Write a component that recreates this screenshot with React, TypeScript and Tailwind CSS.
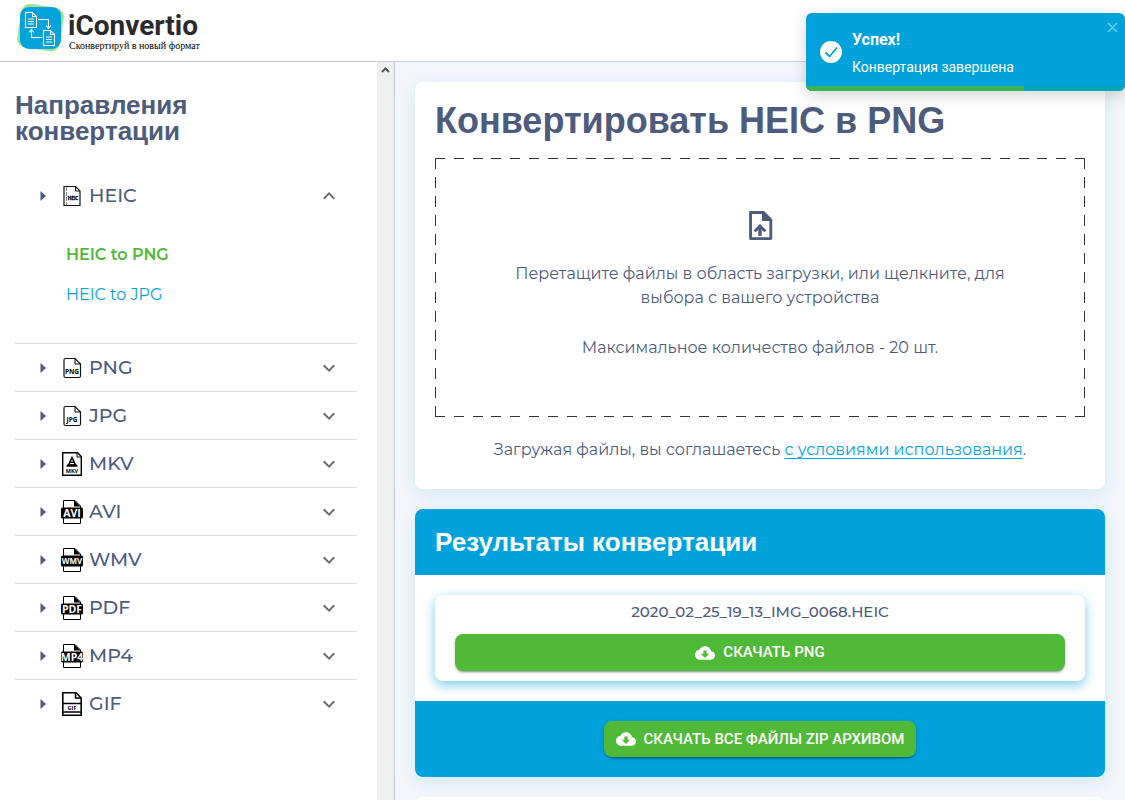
import type { ReactNode } from "react";

const dashedFrame =
  "bg-[repeating-linear-gradient(90deg,#333_0_10px,transparent_10px_calc((100%-10px)/34)),repeating-linear-gradient(90deg,#333_0_10px,transparent_10px_calc((100%-10px)/34)),repeating-linear-gradient(180deg,#333_0_11px,transparent_11px_calc((100%-11px)/13)),repeating-linear-gradient(180deg,#333_0_11px,transparent_11px_calc((100%-11px)/13))] bg-[size:100%_1px,100%_1px,1px_100%,1px_100%] bg-[position:0_0,0_100%,0_0,100%_0] bg-no-repeat";

type Kind = "outline" | "heic" | "mkv" | "band" | "gif";

const formats: { name: string; kind: Kind }[] = [
  { name: "PNG", kind: "outline" },
  { name: "JPG", kind: "outline" },
  { name: "MKV", kind: "mkv" },
  { name: "AVI", kind: "band" },
  { name: "WMV", kind: "band" },
  { name: "PDF", kind: "band" },
  { name: "MP4", kind: "band" },
  { name: "GIF", kind: "gif" },
];

function FormatIcon({ name, kind }: { name: string; kind: Kind }) {
  const label = (y: number, size: number, fill = "#000") => (
    <text x="12" y={y} textAnchor="middle" fontSize={size} fontWeight="700" fill={fill} fontFamily="Open Sans, sans-serif">
      {name}
    </text>
  );
  if (kind === "band") {
    return (
      <svg className="size-6 shrink-0" viewBox="0 0 24 24" aria-hidden="true">
        <path d="M3.500 .5H15L20.500 6V23.500H3.500Z" fill="#fff" stroke="#000" />
        <path d="M14 0 20.500 6.500H14Z" fill="#000" />
        <rect x="1" y="7.500" width="22" height="11" rx="1.500" fill="#000" />
        {label(name === "WMV" ? 16 : 16.8, name === "WMV" ? 8 : 10.5, "#fff")}
      </svg>
    );
  }
  if (kind === "mkv") {
    return (
      <svg className="size-6 shrink-0" viewBox="0 0 24 24" aria-hidden="true">
        <path d="M2.700 .7H17.500L21.300 4.500V23.300H2.700Z" fill="#fff" stroke="#000" strokeWidth="1.400" />
        <path d="M17 .7V5h4.300" fill="none" stroke="#000" />
        <path d="M12 5.500 8.500 13H15.500Z" fill="none" stroke="#000" strokeWidth="1.500" />
        <path d="M10 9.500h4v1.500h-4zM7 12.500h10l.8 2.200H6.200z" fill="#000" />
        {label(21.3, 5.5)}
      </svg>
    );
  }
  if (kind === "gif") {
    return (
      <svg className="size-6 shrink-0" viewBox="0 0 24 24" aria-hidden="true">
        <path d="M2.800 .8H16L21.200 6V23.200H2.800Z" fill="#fff" stroke="#000" strokeWidth="1.600" />
        <path d="M15.500 1V6H21M3 11.500H21M3 20H21" fill="none" stroke="#000" strokeWidth="1.500" />
        {label(17.8, 5.5)}
      </svg>
    );
  }
  return (
    <svg className="size-6 shrink-0" viewBox="0 0 24 24" aria-hidden="true">
      <path
        d={kind === "heic" ? "M4 2.500H15.500L20 7V21.500H4Z" : "M5.500 2.500H15L20.500 8V20Q20.500 21.500 19 21.500H5.500Q4 21.500 4 20V4Q4 2.500 5.500 2.500"}
        fill="#fff"
        stroke="#111"
        strokeWidth="1.200"
      />
      <path d={kind === "heic" ? "M15.500 2.500V7H20" : "M15 2.500V8H20.500"} fill="none" stroke="#111" />
      {kind === "heic" && <path d="M6.500 3V21" stroke="#888" strokeDasharray="4 1" />}
      {kind === "heic" ? (
        <text x="13" y="15.500" textAnchor="middle" fontSize="4.500" fontWeight="700" stroke="#000" strokeWidth=".3" fontFamily="Open Sans, sans-serif">
          {name}
        </text>
      ) : (
        label(17.5, 6.5)
      )}
    </svg>
  );
}

function Caret() {
  return (
    <svg className="h-3 w-2 shrink-0" viewBox="0 0 8 12" aria-hidden="true">
      <path d="M.5 1 6 6 .5 11Z" fill="#4d5b7c" />
    </svg>
  );
}

function Chevron({ up = false }: { up?: boolean }) {
  return (
    <svg className="size-6" viewBox="0 0 24 24" fill="#6f6f6f" aria-hidden="true">
      <path d={up ? "M12 8l-6 6 1.410 1.410L12 10.830l4.590 4.580L18 14z" : "M16.590 8.590 12 13.170 7.410 8.590 6 10l6 6 6-6z"} />
    </svg>
  );
}

function FormatRow({ name, kind, open = false }: { name: string; kind: Kind; open?: boolean }) {
  return (
    <button type="button" aria-expanded={open} className="flex h-12 w-full items-center pr-4 pl-[25px] text-left">
      <Caret />
      <span className="ml-3 flex grow items-center gap-[5px]">
        <FormatIcon name={name} kind={kind} />
        <span className="text-[19px] leading-6 font-medium">{name}</span>
      </span>
      <Chevron up={open} />
    </button>
  );
}

function DownloadButton({ children, wide = false }: { children: ReactNode; wide?: boolean }) {
  return (
    <button
      type="button"
      className={`${wide ? "h-[37px] w-full" : "h-9 px-3"} flex items-center justify-center gap-2 rounded-lg bg-[#50b937] font-[Roboto] text-[15px] font-medium text-white uppercase shadow-[0_3px_1px_-2px_rgba(0,0,0,0.2),0_2px_2px_0_rgba(0,0,0,0.14),0_1px_5px_0_rgba(0,0,0,0.12)]`}
    >
      <svg className="size-5" viewBox="0 0 24 24" fill="currentColor" aria-hidden="true">
        <path d="M19.350 10.040C18.670 6.590 15.640 4 12 4 9.110 4 6.600 5.640 5.350 8.040 2.340 8.360 0 10.910 0 14c0 3.310 2.690 6 6 6h13c2.760 0 5-2.240 5-5 0-2.640-2.050-4.780-4.650-4.960zM17 13l-5 5-5-5h3V9h4v4h3z" />
      </svg>
      {children}
    </button>
  );
}

function Logo() {
  return (
    <svg className="size-12 shrink-0" viewBox="0 0 48 48" aria-hidden="true">
      <rect x="3" y="1.500" width="43" height="44" rx="9" fill="#9fe09a" transform="rotate(9 24 24)" />
      <rect x="4" y="3" width="41" height="42" rx="9" fill="#00a2dc" />
      <g fill="none" stroke="#fff" strokeWidth="1.100">
        <path d="M9.500 8.500H16.500L20.500 12.500V23.500H9.500ZM16.500 8.500V12.500H20.500M12 15h6M12 17.500h6M12 20h6" />
        <path d="M27.500 26.500H34.500L38.500 30.500V41.500H27.500ZM34.500 26.500V30.500H38.500M30 33h6M30 35.500h6M30 38h6" />
        <path d="M22 15.500H32.500V23.500M30 21.500 32.500 24.500 35 21.500M26 33.500H15.500V26M13 28.500 15.500 25.500 18 28.500" />
      </g>
    </svg>
  );
}

export default function App() {
  return (
    <div className="flex h-screen flex-col overflow-hidden bg-white font-[Montserrat,Inter,sans-serif] text-[#4d5b7c]">
      <header className="flex h-[62px] shrink-0 items-start border-b border-[#c7cbdc] pt-1 pl-4">
        <a href="#home" className="flex items-start gap-1">
          <Logo />
          <span className="block pt-2 text-[#2a2a2a]">
            <span className="block font-[Roboto] text-[28px] leading-7 font-bold">iConvertio</span>
            <span className="block pl-px font-['Liberation_Serif'] text-[10px] leading-3 text-black">Сконвертируй в новый формат</span>
          </span>
        </a>
      </header>

      <div className="flex min-h-0 grow">
        <aside className="flex w-[395px] shrink-0 border-r border-[#c7cbdc]">
          <nav className="grow pt-[30px] pr-5 pl-[15px]">
            <h2 className="font-['Liberation_Sans'] text-[26px] leading-[26px] font-bold">
              Направления
              <br />
              конвертации
            </h2>
            <div className="mt-7 border-b border-[#dedede] pb-7">
              <FormatRow name="HEIC" kind="heic" open />
              <ul className="mt-[15px] pl-[51px]">
                <li className="flex h-10 items-center font-semibold text-[#50b937]">
                  <a href="#heic-png">HEIC to PNG</a>
                </li>
                <li className="flex h-10 items-center text-[#00a2dc]">
                  <a href="#heic-jpg">HEIC to JPG</a>
                </li>
              </ul>
            </div>
            <ul>
              {formats.map((format) => (
                <li key={format.name} className="flex h-12 items-start border-b border-[#dedede] last:border-b-0">
                  <FormatRow {...format} />
                </li>
              ))}
            </ul>
          </nav>
          <div className="flex w-[17px] shrink-0 justify-center bg-[#efefef] pt-1" aria-hidden="true">
            <svg className="h-2 w-[9px]" viewBox="0 0 9 8">
              <path d="M1 6 4.500 2.500 8 6" fill="none" stroke="#555" strokeWidth="2" />
            </svg>
          </div>
        </aside>

        <main className="flex min-w-0 grow flex-col gap-5 overflow-hidden bg-[#f4f6fb] p-5">
          <section className="shrink-0 rounded-lg bg-white px-5 pb-[27px] shadow-[0_5px_20px_rgba(0,162,220,0.14)]">
            <h1 className="pt-[19px] font-['Liberation_Sans'] text-[36px] leading-10 font-bold">Конвертировать HEIC в PNG</h1>
            <button type="button" className={`mt-[17px] flex h-[259px] w-full flex-col items-center pt-[50px] ${dashedFrame}`}>
              <svg className="size-9" viewBox="0 0 24 24" fill="none" stroke="#4d5b7c" strokeWidth="1.900" aria-hidden="true">
                <path d="M5.700 3H14.300L19.200 7.900V20.400H5.700Z" strokeLinejoin="round" />
                <path d="M13.300 2.500V8.700H19.500Z" fill="#4d5b7c" stroke="none" />
                <path d="M12 10.600 16.200 14.800 15.100 16.100 13.100 14.600V18.600H10.900V14.600L8.900 16.100 7.800 14.800Z" fill="#4d5b7c" stroke="none" />
              </svg>
              <span className="mt-[18px] max-w-[520px] leading-6">
                Перетащите файлы в область загрузки, или щелкните, для
                <br />
                выбора с вашего устройства
              </span>
              <span className="mt-[26px] leading-6">Максимальное количество файлов - 20 шт.</span>
            </button>
            <p className="mt-[21px] text-center leading-6">
              Загружая файлы, вы соглашаетесь{" "}
              <a href="#terms" className="text-[#00a2dc] underline underline-offset-3">
                с условиями использования
              </a>
              .
            </p>
          </section>

          <section className="shrink-0 overflow-hidden rounded-lg bg-white shadow-[0_5px_20px_rgba(0,162,220,0.14)]">
            <h2 className="flex h-[66px] items-center bg-[#00a2dc] px-5 font-['Liberation_Sans'] text-[26px] font-bold text-white">
              Результаты конвертации
            </h2>
            <div className="p-5">
              <div className="rounded-lg px-5 pt-[5px] pb-[10px] shadow-[0_4px_12px_rgba(0,162,220,0.55)]">
                <p className="mb-[10px] text-center text-[15px] leading-6 font-medium">2020_02_25_19_13_IMG_0068.HEIC</p>
                <DownloadButton wide>Скачать PNG</DownloadButton>
              </div>
            </div>
            <div className="flex h-[76px] items-center justify-center bg-[#00a2dc]">
              <DownloadButton>Скачать все файлы ZIP архивом</DownloadButton>
            </div>
          </section>
          <section className="h-24 shrink-0 rounded-lg bg-white" />
        </main>
      </div>

      <div
        role="status"
        className="absolute top-[13px] right-0 flex h-[78px] w-[319px] overflow-hidden rounded-md bg-[#00a2dc] pt-[15px] pl-[14px] font-[Roboto] text-white shadow-[0_4px_16px_rgba(0,0,0,0.18)]"
      >
        <svg className="mt-[13px] size-[22px] shrink-0" viewBox="0 0 22 22" aria-hidden="true">
          <circle cx="11" cy="11" r="11" fill="#fff" />
          <path d="M5.500 11.500 9.500 15.500 17 6.500" fill="none" stroke="#00a2dc" strokeWidth="1.800" />
        </svg>
        <div className="ml-[10px]">
          <p className="text-base leading-6 font-bold">Успех!</p>
          <p className="mt-[3px] text-sm leading-6">Конвертация завершена</p>
        </div>
        <button type="button" aria-label="Закрыть" className="absolute top-[9px] right-[7px] text-white/40">
          <svg className="size-[11px]" viewBox="0 0 11 11" aria-hidden="true">
            <path d="M1 1 10 10M10 1 1 10" stroke="currentColor" strokeWidth="1.700" />
          </svg>
        </button>
        <div className="absolute inset-x-0 bottom-0 h-[5px] bg-[#00a6b4]">
          <div className="h-full w-[218px] bg-[#3db25a]" />
        </div>
      </div>
    </div>
  );
}
